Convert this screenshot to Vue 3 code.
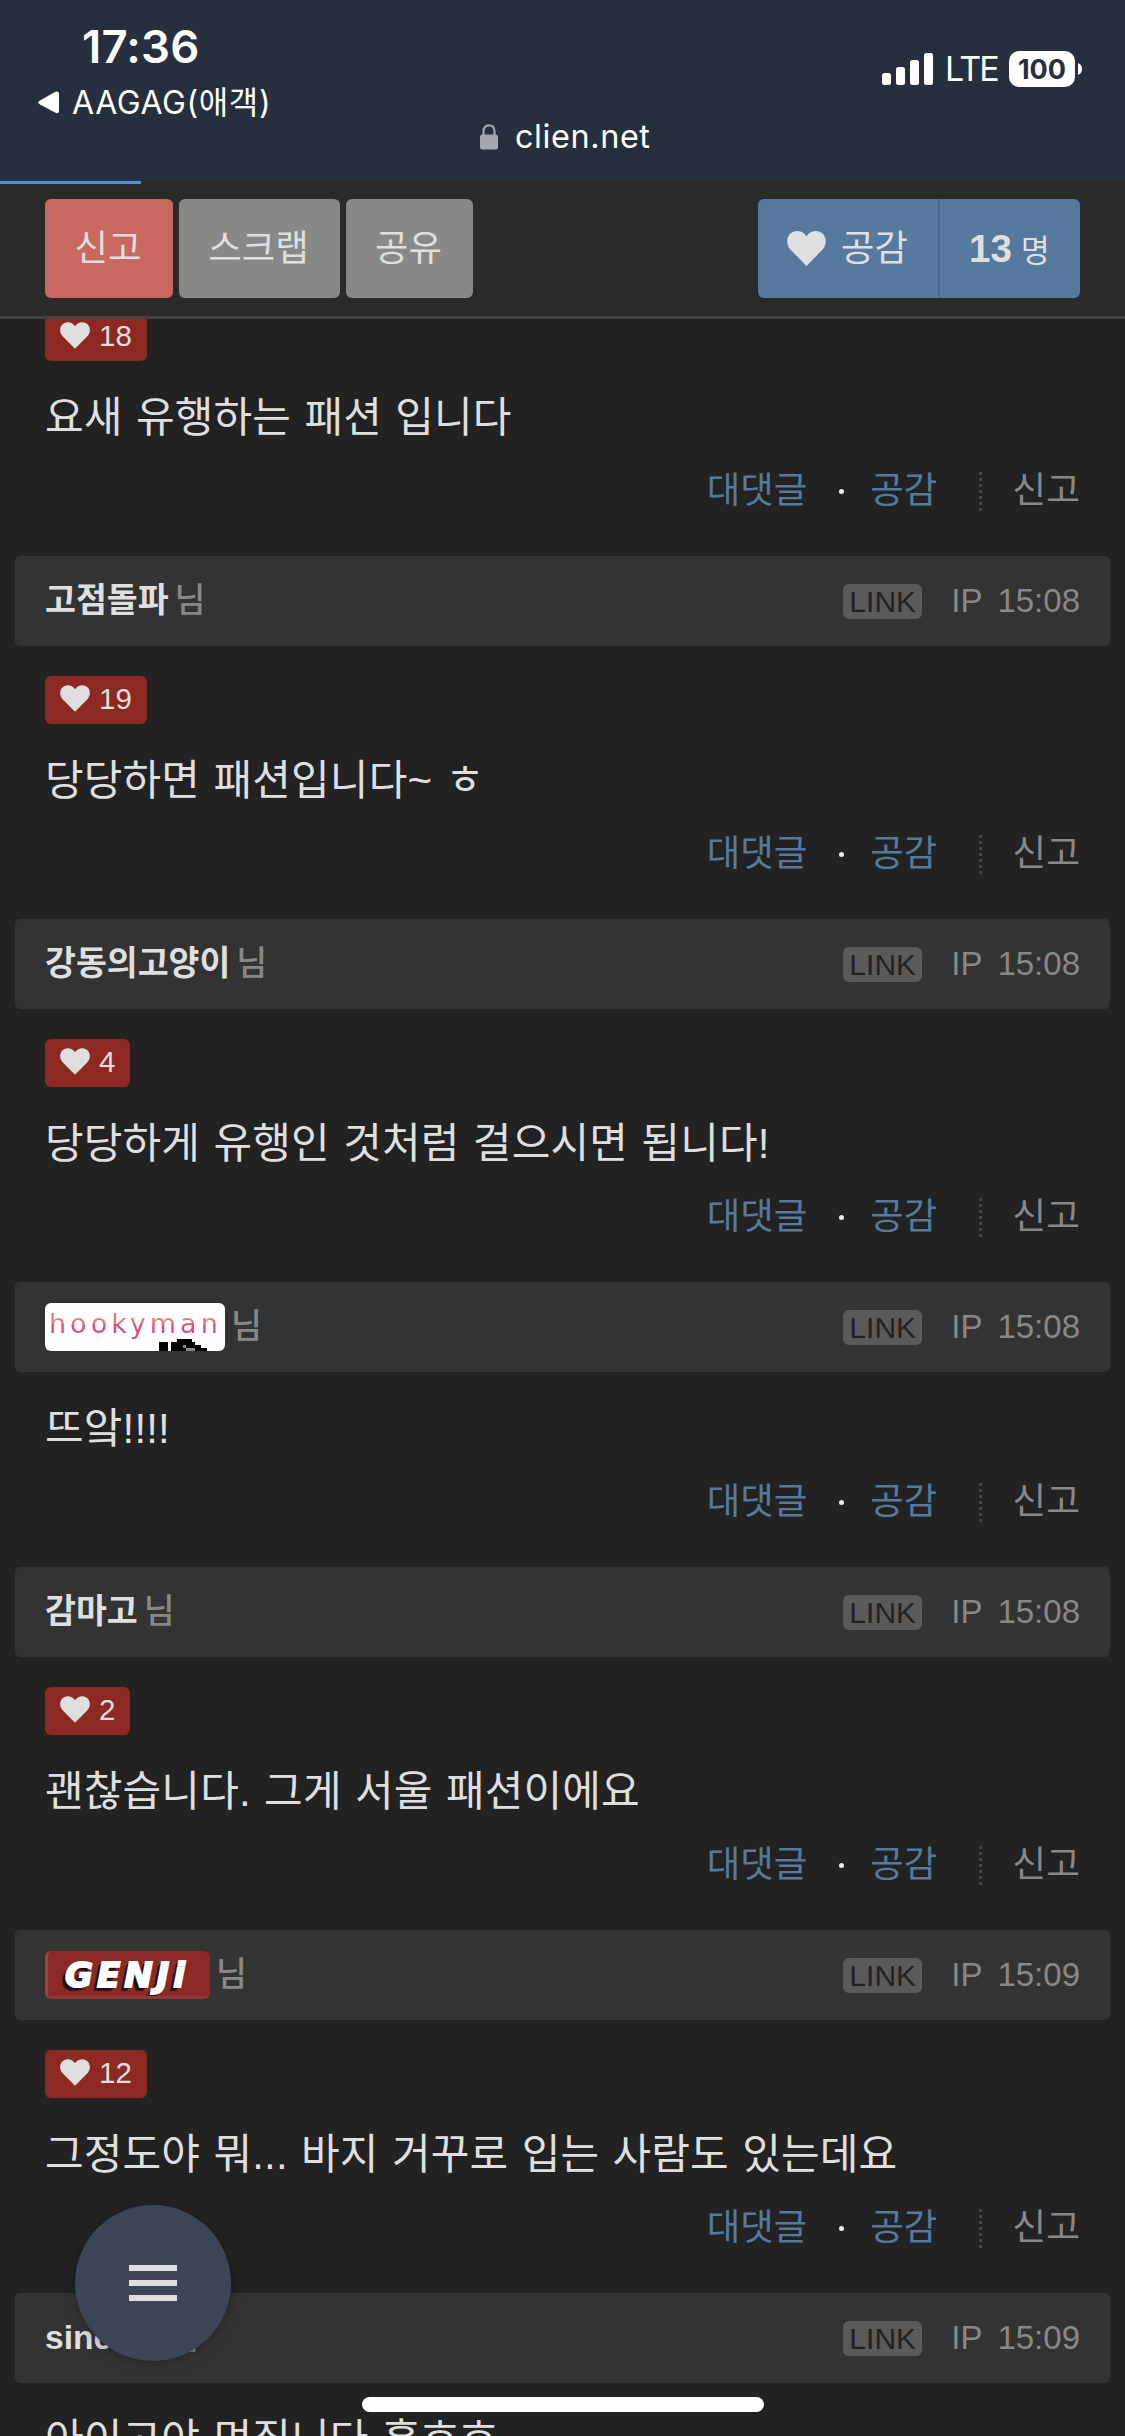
<script setup>
const comments = [
  { likes: 18, text: '요새 유행하는 패션 입니다' },
  { name: '고점돌파', time: '15:08', likes: 19, text: '당당하면 패션입니다~ ㅎ' },
  { name: '강동의고양이', time: '15:08', likes: 4, text: '당당하게 유행인 것처럼 걸으시면 됩니다!' },
  { badge: 'hookyman', time: '15:08', text: '뜨앜!!!!' },
  { name: '감마고', time: '15:08', likes: 2, text: '괜찮습니다. 그게 서울 패션이에요' },
  { badge: 'genji', time: '15:09', likes: 12, text: '그정도야 뭐... 바지 거꾸로 입는 사람도 있는데요' },
  { name: 'sincere', time: '15:09', text: '아이고야 멋집니다 훗흐흐' },
]
const heart = 'M15 26.5 2.6 14C-1.2 9.800 -.5 3.200 4 .900 8 -1 12.500 .300 15 4 17.500 .300 22 -1 26 .900 30.500 3.200 31.200 9.800 27.400 14Z'
</script>

<template>
  <div class="screen">
    <header class="browser">
      <div class="status">
        <div class="left">
          <div class="clock">17:36</div>
          <div class="back">
            <svg width="21" height="23" viewBox="0 0 21 23"><path d="M2 9.500 17 1Q21-.5 21 3.500V19.500Q21 23.500 17 21.500L2 13.500Q-1.500 11.500 2 9.500Z" fill="#fff" /></svg>
            <span>AAGAG(애객)</span>
          </div>
        </div>
        <div class="right">
          <svg width="51" height="32" viewBox="0 0 51 32" fill="#fff">
            <rect x="0" y="20" width="9" height="12" rx="2.500" />
            <rect x="14" y="14" width="9" height="18" rx="2.500" />
            <rect x="28" y="7" width="9" height="25" rx="2.500" />
            <rect x="42" y="0" width="9" height="32" rx="2.500" />
          </svg>
          <span class="lte">LTE</span>
          <span class="battery">100</span>
          <svg class="nub" width="4" height="12" viewBox="0 0 4 12"><path d="M0 0Q4 1.500 4 6T0 12Z" fill="#fff" /></svg>
        </div>
      </div>
      <div class="address">
        <svg width="18" height="26" viewBox="0 0 18 26">
          <path d="M3.500 12V7.500C3.500 3.500 5.500 1.300 9 1.300S14.500 3.500 14.500 7.500V12" fill="none" stroke="#a3a7b2" stroke-width="2.200" />
          <rect x="0" y="10.500" width="18" height="15" rx="2.500" fill="#a3a7b2" />
        </svg>
        <span>clien.net</span>
      </div>
    </header>

    <nav class="toolbar">
      <i class="progress"></i>
      <button class="btn report">신고</button>
      <button class="btn scrap">스크랩</button>
      <button class="btn share">공유</button>
      <div class="like">
        <span class="like-main">
          <svg width="39" height="35" viewBox="0 0 30 26.500" preserveAspectRatio="none"><path :d="heart" fill="#dfdfdf" /></svg>
          <span>공감</span>
        </span>
        <span class="like-count"><b>13</b><small>명</small></span>
      </div>
    </nav>

    <main class="list">
      <article v-for="(c, i) in comments" :key="i">
        <div v-if="c.time" class="head">
          <strong v-if="c.name" class="name">{{ c.name }}</strong>
          <span v-else-if="c.badge === 'hookyman'" class="nick hooky">
            <span class="hooky-text">hookyman</span>
            <svg width="180" height="48" shape-rendering="crispEdges">
              <path d="M114 39h9v9h-9zM132 36h15v3h3v3h6v3h6v3h-36v-9h6z" fill="#000" />
              <path d="M138 42h3v3h-3zM141 45h9v3h-9z" fill="#888" />
            </svg>
          </span>
          <span v-else class="nick genji"><span>GENJi</span></span>
          <span class="nim">님</span>
          <span class="link">LINK</span>
          <span class="ip">IP</span>
          <time>{{ c.time }}</time>
        </div>
        <div class="body" :class="{ first: i === 0 }">
          <div v-if="c.likes" class="likes">
            <svg width="30" height="27" viewBox="0 0 30 26.500"><path :d="heart" fill="#dfdfdf" /></svg>
            <span>{{ c.likes }}</span>
          </div>
          <p>{{ c.text }}</p>
          <div class="actions">
            <a class="reply">대댓글</a>
            <i class="dot"></i>
            <a class="agree">공감</a>
            <i class="sep"></i>
            <a class="flag">신고</a>
          </div>
        </div>
      </article>
    </main>

    <button class="fab"><i></i><i></i><i></i></button>
    <div class="home"></div>
  </div>
</template>

<style>
body { background: #222; }
</style>

<style scoped>
.screen {
  position: relative;
  display: flex;
  flex-direction: column;
  width: 1125px;
  height: 2436px;
  overflow: hidden;
  background: #222;
  color: #dfdfdf;
  font-family: "Liberation Sans", "Noto Sans CJK KR", sans-serif;
}
svg { display: block; flex: none; }
button { border: 0; padding: 0; font: inherit; color: inherit; }
.browser {
  height: 181px;
  flex: none;
  background: #262f3d;
  color: #fff;
  font-family: Inter, "Noto Sans CJK KR", sans-serif;
}
.status { display: flex; justify-content: space-between; height: 117px; }
.left { padding: 20px 0 0 38px; }
.clock { padding-left: 44px; height: 55px; line-height: 54px; font-size: 45.500px; font-weight: 600; letter-spacing: .2px; }
.back { display: flex; align-items: center; gap: 13px; height: 54px; font-size: 32px; line-height: 54px; letter-spacing: .6px; }
.back span { padding-top: 2px; }
.right { display: flex; align-items: center; height: 36px; margin: 51px 43px 0 0; }
.lte { margin: 0 11px 0 12px; width: 53px; font-size: 34px; letter-spacing: -1.800px; line-height: 38px; }
.battery { width: 66px; height: 36px; border-radius: 10px; background: #fff; color: #262f3d; font-size: 27px; font-weight: 700; line-height: 37px; text-align: center; }
.nub { margin-left: 3px; }
.address { display: flex; align-items: center; gap: 17px; height: 39px; padding-left: 480px; font-size: 32.400px; letter-spacing: .6px; line-height: 39px; }
.toolbar {
  position: relative;
  display: flex;
  flex: none;
  gap: 6px;
  box-sizing: border-box;
  height: 138px;
  padding: 18px 45px 0;
  border-bottom: 3px solid #424242;
  background: #2a2a2a;
  font-size: 36.400px;
}
.progress { position: absolute; left: 0; top: 0; width: 141px; height: 3px; background: #468ff7; }
.btn { box-sizing: border-box; height: 99px; padding-right: 2px; border-radius: 6px; background: #888; line-height: 99px; }
.report { width: 128px; background: #c86860; }
.scrap { width: 161px; }
.share { width: 127px; }
.like { display: flex; width: 322px; height: 99px; margin-left: auto; border-radius: 6px; background: #56799e; line-height: 99px; }
.like-main { display: flex; align-items: center; gap: 15px; box-sizing: border-box; width: 182px; padding-left: 29px; border-right: 2px solid #4c688b; }
.like-count { display: flex; align-items: baseline; gap: 9px; padding-left: 29px; }
.like-count b { font-size: 38.500px; }
.like-count small { font-size: 31.500px; }
.list { flex: 1; min-height: 0; overflow: hidden; }
.head {
  display: flex;
  align-items: center;
  height: 90px;
  margin: 0 15px;
  padding: 0 30px;
  border-radius: 5px;
  background: #333;
  font-size: 33.600px;
  line-height: 90px;
}
.nim { margin-left: 6px; color: #888; font-weight: 500; }
.link { margin-left: auto; width: 79px; height: 35px; border-radius: 6px; background: #5a5a5a; color: #222; font-size: 30px; line-height: 35px; text-align: center; }
.ip { margin-left: 29px; color: #888; font-size: 33px; line-height: 88px; }
time { margin-left: 15px; color: #888; font-size: 33px; line-height: 88px; }
.nick { height: 48px; border-radius: 6px; overflow: hidden; position: relative; }
.hooky { width: 180px; background: #fff; }
.hooky svg { position: absolute; left: 0; top: 0; }
.hooky-text {
  display: block;
  padding-left: 4px;
  font: 27px/42px "DejaVu Sans", sans-serif;
  letter-spacing: 4px;
  background: linear-gradient(#e07f7a 21px, #df4d7c 21px);
  -webkit-background-clip: text;
  background-clip: text;
  color: transparent;
}
.genji { box-sizing: border-box; width: 165px; border-left: 3px solid #9c4244; border-bottom: 3px solid #963535; background: #8b2927; }
.genji span {
  display: block;
  padding-left: 17px;
  font: italic 700 34px/49px "DejaVu Sans", sans-serif;
  letter-spacing: 4px;
  color: #fff;
  -webkit-text-stroke: 2px #fff;
  text-shadow: -3px 2px 0 #111, -4px 4px 1px #311;
}
.body { padding: 30px 45px 0; }
.body.first { padding-top: 0; margin-top: -6px; }
.likes {
  display: flex;
  align-items: center;
  gap: 9px;
  box-sizing: border-box;
  width: fit-content;
  height: 48px;
  margin-bottom: 30px;
  padding: 0 15px 3px;
  border-radius: 6px;
  background: #8d2823;
  font-size: 29.500px;
}
p { margin: 0; height: 50px; font-size: 42px; line-height: 53px; letter-spacing: .15px; word-spacing: 1.500px; white-space: nowrap; }
.actions { display: flex; align-items: center; justify-content: flex-end; height: 42px; padding: 29px 0 44px; font-size: 36.400px; line-height: 42px; }
.reply, .agree { color: #56799e; }
.dot { width: 5px; height: 5px; margin: 0 26px 0 32px; border-radius: 50%; background: #eee; }
.sep { width: 3px; height: 39px; margin: 0 30px 0 42px; background: repeating-linear-gradient(#444 0 3px, transparent 3px 6px); }
.flag { color: #888; font-size: 36.800px; }
.fab {
  position: absolute;
  left: 75px;
  top: 2205px;
  display: flex;
  flex-direction: column;
  align-items: center;
  justify-content: center;
  gap: 9px;
  width: 156px;
  height: 156px;
  border-radius: 50%;
  background: #3b4556;
  box-shadow: 0 2px 12px rgba(0, 0, 0, .3);
}
.fab i { width: 48px; height: 6px; background: #dfdfdf; }
.home { position: absolute; left: 362px; top: 2397px; width: 402px; height: 15px; border-radius: 8px; background: #fff; }
</style>
